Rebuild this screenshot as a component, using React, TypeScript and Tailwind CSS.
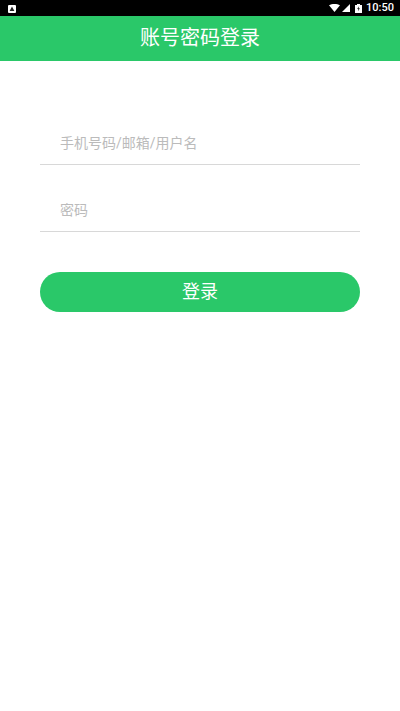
export default function App() {
  return (
    <div className="w-[400px] h-[711px] bg-white flex flex-col font-['Roboto','Noto_Sans_CJK_SC',sans-serif]">
      <div className="h-4 bg-black flex items-center justify-between pl-2 pr-[6px] shrink-0">
        <svg width="8" height="8" viewBox="0 0 8 8" className="mt-[1px]">
          <rect width="8" height="8" rx="1" fill="#fff" />
          <path d="M4 1.5 L6.4 6 H1.6 Z" fill="#222" />
        </svg>
        <div className="flex items-center">
          <svg width="11" height="8" viewBox="0 0 11 8" className="mr-[2px]">
            <path d="M0 1.3 C3 -0.4 8 -0.4 11 1.3 L5.5 8 Z" fill="#fff" />
          </svg>
          <svg width="8" height="8" viewBox="0 0 8 8" className="mr-[5px]">
            <path d="M8 0 V8 H0 Z" fill="#fff" />
          </svg>
          <svg width="7" height="9" viewBox="0 0 7 9" className="mr-[4px]">
            <path d="M2 0 H5 V1 H7 V9 H0 V1 H2 Z" fill="#fff" />
            <path d="M3.9 2.2 L2.2 5.1 H3.3 L3 7.3 L4.9 4.2 H3.7 Z" fill="#222" />
          </svg>
          <span className="text-[11px] leading-4 text-white font-medium">10:50</span>
        </div>
      </div>
      <div className="h-[45px] bg-[#2ac869] flex items-center justify-center shrink-0">
        <h1 className="text-[20px] text-white font-normal -mt-[1px]">账号密码登录</h1>
      </div>
      <div className="flex flex-col px-10 pt-[60px]">
        <input
          placeholder="手机号码/邮箱/用户名"
          className="h-11 pl-5 text-sm border-b border-[#d8d8d8] outline-none placeholder:text-[#bbbbbb]"
        />
        <input
          placeholder="密码"
          className="h-11 mt-[23px] pl-5 text-sm border-b border-[#d8d8d8] outline-none placeholder:text-[#bbbbbb]"
        />
        <button className="h-10 mt-10 rounded-full bg-[#2ac869] text-white text-lg">登录</button>
      </div>
    </div>
  );
}
